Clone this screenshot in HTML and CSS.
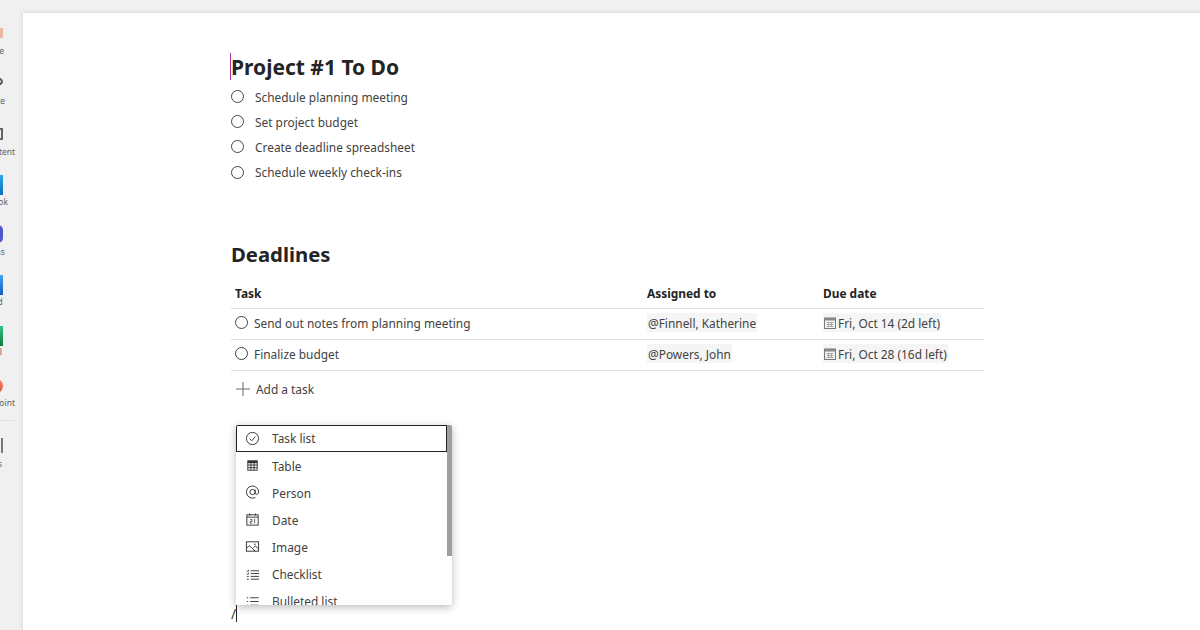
FILE: index.html
```html
<!DOCTYPE html>
<html lang="en">
<head>
  <meta charset="UTF-8">
  <title>Project #1 To Do</title>
  <link rel="stylesheet" href="styles.css">
</head>
<body>
  <svg class="defs" width="0" height="0">
    <symbol id="cal" viewBox="0 0 12 12"><rect x="0.5" y="1" width="11" height="10.5" fill="none" stroke="#777"/><rect x="0.5" y="1" width="11" height="2.5" fill="#888"/><path d="M2.5 5.5h7M2.5 7.5h7M2.5 9.500h7M4.500 5v5M7.500 5v5" stroke="#999" stroke-width="0.8"/></symbol>
  </svg>

  <aside class="rail">
    <div class="app"><span class="app-icon orange"></span><span class="app-label">Home</span></div>
    <div class="app"><span class="app-icon ring"></span><span class="app-label">Create</span></div>
    <div class="app"><span class="app-icon dark"></span><span class="app-label">My Content</span></div>
    <div class="app"><span class="app-icon outlook"></span><span class="app-label">Outlook</span></div>
    <div class="app"><span class="app-icon teams"></span><span class="app-label">Teams</span></div>
    <div class="app"><span class="app-icon word"></span><span class="app-label">Word</span></div>
    <div class="app"><span class="app-icon excel"></span><span class="app-label">Excel</span></div>
    <div class="app"><span class="app-icon ppt"></span><span class="app-label">PowerPoint</span></div>
    <div class="rail-line"></div>
    <div class="app last"><span class="app-icon apps"></span><span class="app-label">Apps</span></div>
  </aside>

  <main class="page">
    <h1 class="title-caret">Project #1 To Do</h1>
    <ul class="todo">
      <li><span class="circle"></span>Schedule planning meeting</li>
      <li><span class="circle"></span>Set project budget</li>
      <li><span class="circle"></span>Create deadline spreadsheet</li>
      <li><span class="circle"></span>Schedule weekly check-ins</li>
    </ul>

    <h2>Deadlines</h2>
    <div class="tasks">
      <div class="row head">
        <div>Task</div>
        <div>Assigned to</div>
        <div>Due date</div>
      </div>
      <div class="row">
        <div class="task-name"><span class="circle"></span>Send out notes from planning meeting</div>
        <div><span class="chip">@Finnell, Katherine</span></div>
        <div><span class="chip"><svg class="cal"><use href="#cal"/></svg>Fri, Oct 14 (2d left)</span></div>
      </div>
      <div class="row">
        <div class="task-name"><span class="circle"></span>Finalize budget</div>
        <div><span class="chip">@Powers, John</span></div>
        <div><span class="chip"><svg class="cal"><use href="#cal"/></svg>Fri, Oct 28 (16d left)</span></div>
      </div>
    </div>
    <div class="add-task">
      <svg width="16" height="16" viewBox="0 0 16 16"><path d="M8 1v14M1 8h14" stroke="#666" stroke-width="1" fill="none"/></svg>
      Add a task
    </div>

    <div class="slash">/</div>

    <div class="menu">
      <div class="menu-item selected">
        <svg class="menu-icon" viewBox="0 0 16 16"><circle cx="8" cy="8" r="6.5" fill="none" stroke="#333"/><path d="M5 8.2l2.2 2.2L11 6" fill="none" stroke="#333"/></svg>
        Task list
      </div>
      <div class="menu-item">
        <svg class="menu-icon" viewBox="0 0 16 16"><rect x="3" y="3" width="10" height="10" fill="none" stroke="#333"/><rect x="3" y="3" width="10" height="2.5" fill="#333"/><path d="M3 7.5h10M3 10.3h10M6.3 5v8M9.7 5v8" stroke="#333" fill="none"/></svg>
        Table
      </div>
      <div class="menu-item">
        <svg class="menu-icon" viewBox="0 0 16 16"><circle cx="8" cy="7.500" r="2.800" fill="none" stroke="#333"/><path d="M10.800 4.700v4c0 2 3.700 1.800 3.700-1.200A6.500 6.500 0 1 0 11 13.300" fill="none" stroke="#333"/></svg>
        Person
      </div>
      <div class="menu-item">
        <svg class="menu-icon" viewBox="0 0 16 16"><rect x="2" y="3" width="12" height="11" fill="none" stroke="#333"/><path d="M2 5.500h12M5 1.500v2.500M11 1.500v2.500" stroke="#333" fill="none"/><path d="M5.500 8h2v2h-2v2h2M9.500 8l.8-.3V12" stroke="#333" stroke-width="0.8" fill="none"/></svg>
        Date
      </div>
      <div class="menu-item">
        <svg class="menu-icon" viewBox="0 0 16 16"><rect x="1.500" y="3" width="13" height="10" fill="none" stroke="#333"/><path d="M1.500 10l3-3 6.500 6M9 9l2-1.500 3.500 3" fill="none" stroke="#333"/><circle cx="10.500" cy="5.500" r="0.8" fill="#333"/></svg>
        Image
      </div>
      <div class="menu-item">
        <svg class="menu-icon" viewBox="0 0 16 16"><path d="M6 4h9M6 7h9M6 10h9M6 13h9M2 4l1 1 1-2M2 7l1 1 1-2M2 10h2M2 13h2" fill="none" stroke="#333"/></svg>
        Checklist
      </div>
      <div class="menu-item">
        <svg class="menu-icon" viewBox="0 0 16 16"><path d="M5.500 4h9M5.500 8h9M5.500 12h9M2 4h1.500M2 8h1.500M2 12h1.500" fill="none" stroke="#333"/></svg>
        Bulleted list
      </div>
      <div class="menu-thumb"></div>
    </div>
  </main>
</body>
</html>
```

FILE: styles.css
```css
* {
  box-sizing: border-box;
}

html, body {
  height: 100%;
}

body {
  margin: 0;
  display: flex;
  overflow: hidden;
  background-color: #f0f0f0;
  color: #242424;
  font-family: "Noto Sans", "Open Sans", sans-serif;
}

.defs {
  position: absolute;
}

/* left app rail, cut off by the window edge */
.rail {
  width: 23px;
  flex: none;
  padding-top: 7px;
  overflow: hidden;
  display: flex;
  flex-direction: column;
  align-items: flex-end;
}

.app {
  height: 50.2px;
  width: 50px;
  flex: none;
  margin-right: 6px;
  display: flex;
  flex-direction: column;
  justify-content: flex-end;
  align-items: center;
}

.app-icon {
  width: 22px;
  flex: none;
}

.app-label {
  font-size: 8.5px;
  line-height: 12px;
  color: #616161;
  white-space: nowrap;
}

.orange { height: 10px; margin-bottom: 7px; background: #e9b9a2; }
.ring { height: 11px; margin-bottom: 8px; border: 2px solid #555; border-radius: 50%; }
.dark { height: 12px; margin-bottom: 6px; border: 2px solid #666; }
.outlook { height: 20px; margin-bottom: 1px; background: linear-gradient(#28a8ea, #0f6cbd); }
.teams { height: 18px; margin-bottom: 3px; background: #5059c9; border-radius: 5px; }
.word { height: 20px; margin-bottom: 1px; background: linear-gradient(#41a5ee, #185abd); }
.excel { height: 20px; margin-bottom: 0; background: linear-gradient(#33c481, #107c41); }
.ppt { height: 18px; margin-bottom: 2px; background: linear-gradient(#ff8f6b, #d35230); border-radius: 50%; }
.apps { height: 15px; margin-bottom: 5px; border-right: 2px solid #777; }

.rail-line {
  width: 50px;
  margin-right: 8px;
  border-top: 1px solid #e0e0e0;
  margin-top: 11px;
  flex: none;
}

.app.last {
  height: 49px;
}

.page {
  position: relative;
  flex: 1;
  margin-top: 13px;
  padding: 40px 216px 0 208px;
  background-color: #fff;
  box-shadow: 0 0 4px rgba(0, 0, 0, 0.16);
}

h1, h2 {
  margin: 0;
  font-weight: 700;
  color: #242424;
}

.title-caret {
  margin-left: -1px;
  border-left: 1.5px solid #b5379b;
  height: 27px;
  font-size: 21px;
  line-height: 28px;
  white-space: nowrap;
}

.todo {
  list-style: none;
  margin: 0;
  padding: 4px 0 0;
}

.todo li {
  display: flex;
  align-items: center;
  height: 25.2px;
  font-size: 11.9px;
  color: #424242;
}

.circle {
  width: 13px;
  height: 13px;
  flex: none;
  border: 1px solid #444;
  border-radius: 50%;
  background: #fff;
}

.todo .circle {
  margin-right: 11px;
}

h2 {
  margin-top: 54px;
  font-size: 20.3px;
  line-height: 30px;
}

.tasks {
  margin-top: 10px;
}

.row {
  display: grid;
  grid-template-columns: 412px 176px 1fr;
  align-items: center;
  height: 31px;
  padding-bottom: 2px;
  padding-left: 4px;
  font-size: 11.9px;
  color: #424242;
  border-bottom: 1px solid #e0e0e0;
}

.row.head {
  height: 30px;
  padding-bottom: 0;
  font-weight: 700;
  color: #242424;
}

.task-name {
  display: flex;
  align-items: center;
  gap: 6px;
}

.chip {
  display: inline-flex;
  align-items: center;
  gap: 2px;
  background-color: #f5f5f5;
  padding: 0 1px;
  height: 19px;
}

.cal {
  width: 12px;
  height: 12px;
}

.add-task {
  display: flex;
  align-items: center;
  gap: 5px;
  height: 36px;
  padding-left: 4px;
  font-size: 11.9px;
  color: #424242;
}

.slash {
  margin-top: 198px;
  font-size: 14px;
  line-height: 17px;
  width: 6px;
  color: #424242;
  border-right: 1px solid #242424;
}

/* slash command popup */
.menu {
  position: absolute;
  left: 213px;
  top: 412px;
  width: 216px;
  height: 180px;
  overflow: hidden;
  background-color: #fff;
  border-radius: 2px;
  box-shadow: 0 2px 8px rgba(0, 0, 0, 0.28);
  font-size: 11.9px;
  color: #424242;
}

.menu-item {
  display: flex;
  align-items: center;
  gap: 12px;
  height: 27.1px;
  padding-left: 9px;
}

.menu-item.selected {
  width: 211px;
  border: 1px solid #242424;
  padding-left: 8px;
  padding-bottom: 1px;
}

.menu-icon {
  width: 15px;
  height: 15px;
  flex: none;
}

.menu-thumb {
  position: absolute;
  top: 0;
  right: 0;
  width: 5px;
  height: 131px;
  background-color: #9e9e9e;
}
```
